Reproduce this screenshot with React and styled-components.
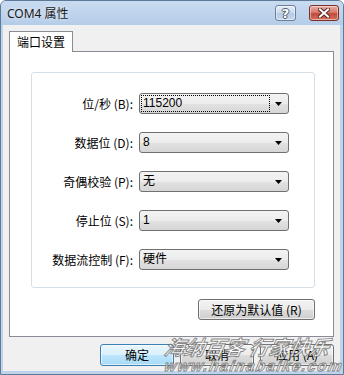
import React from "react";
import styled, { createGlobalStyle } from "styled-components";

const Global = createGlobalStyle`
  html, body { margin: 0; padding: 0; background: #ffffff; }
  body { font-family: "Liberation Sans", "Noto Sans CJK SC", sans-serif; font-size: 12px; color: #000; }
  * { box-sizing: border-box; }
`;

const Window = styled.div`
  position: relative;
  width: 344px;
  height: 375px;
  display: flex;
  flex-direction: column;
  background: #bfd3ea;
  border: 1px solid #5e7a99;
  border-radius: 6px 6px 0 0;
  overflow: hidden;
`;

const TitleBar = styled.div`
  height: 24px;
  flex: none;
  display: flex;
  align-items: flex-start;
  padding: 4px 4px 0 6px;
  background: linear-gradient(#c9dbf0, #b5cce8);
`;

const Title = styled.div`
  flex: 1;
  font-family: "Noto Sans", "Noto Sans CJK SC", sans-serif;
  font-size: 12px;
  line-height: 17px;
  color: #1a1a1a;
  text-shadow: 0 0 4px rgba(255, 255, 255, 0.9);
`;

const CaptionButton = styled.div`
  width: ${(p) => p.$w}px;
  height: 16px;
  margin-left: ${(p) => p.$ml || 0}px;
  border: 1px solid ${(p) => (p.$close ? "#7a2f28" : "#6a7f9c")};
  border-radius: 3px;
  display: flex;
  align-items: center;
  justify-content: center;
  background: ${(p) =>
    p.$close
      ? "linear-gradient(#e8aca4 0%, #d97a6c 45%, #c24a3a 55%, #d3705f 100%)"
      : "linear-gradient(#e4edf7 0%, #cfdcee 45%, #b7cbe4 55%, #c6d7ec 100%)"};
  box-shadow: inset 0 0 0 1px rgba(255, 255, 255, 0.45);
`;

const HelpGlyph = styled.span`
  font-family: "DejaVu Sans", sans-serif;
  font-weight: bold;
  font-size: 13px;
  line-height: 13px;
  color: #ffffff;
  text-shadow: -1px 0 #4a5a70, 1px 0 #4a5a70, 0 -1px #4a5a70, 0 1px #4a5a70;
`;

const Body = styled.div`
  flex: 1;
  display: flex;
  flex-direction: column;
  margin: 0 3px 3px 2px;
  padding: 6px 6px 5px 6px;
  background: #f0f0f0;
`;

const TabStrip = styled.div`
  display: flex;
  flex: none;
`;

const Tab = styled.div`
  position: relative;
  z-index: 1;
  height: 21px;
  margin-bottom: -1px;
  padding: 0 7px;
  border: 1px solid #898c95;
  border-bottom: none;
  background: #ffffff;
  font-family: "Noto Sans CJK SC", sans-serif;
  font-size: 12px;
  line-height: 19px;
`;

const Panel = styled.div`
  flex: 1;
  display: flex;
  flex-direction: column;
  padding: 20px 18px 0 21px;
  border: 1px solid #898c95;
  background: #ffffff;
`;

const Group = styled.div`
  display: grid;
  grid-template-columns: 101px 150px;
  column-gap: 6px;
  row-gap: 18px;
  align-items: center;
  padding: 20px 0 17px 0;
  border: 1px solid #d5dfe5;
  border-radius: 3px;
`;

const Label = styled.div`
  text-align: right;
  font-family: "Noto Sans CJK SC", sans-serif;
  font-size: 12px;
  line-height: 16px;
  white-space: nowrap;
`;

const Combo = styled.div`
  height: 21px;
  display: flex;
  align-items: center;
  padding: 0 6px 0 1px;
  border: 1px solid #707070;
  border-radius: 3px;
  background: linear-gradient(#f3f3f3 0%, #ececec 50%, #e2e2e2 51%, #d6d6d6 100%);
`;

const Value = styled.div`
  flex: 1;
  height: 17px;
  padding-left: 1px;
  border: 1px ${(p) => (p.$focus ? "dotted #000" : "solid transparent")};
  font-family: "Liberation Sans", "Noto Sans CJK SC", sans-serif;
  font-size: 12px;
  line-height: 15px;
  white-space: nowrap;
`;

const Arrow = styled.svg`
  margin-left: 5px;
  flex: none;
`;

const ResetRow = styled.div`
  display: flex;
  justify-content: flex-end;
  margin-top: 11px;
`;

const Button = styled.button`
  width: ${(p) => p.$w}px;
  height: ${(p) => p.$h}px;
  padding: 0;
  border: 1px solid ${(p) => (p.$default ? "#3c7fb1" : "#707070")};
  border-radius: 3px;
  background: ${(p) =>
    p.$default
      ? "linear-gradient(#eaf6fd 0%, #d9f0fc 50%, #bee6fd 51%, #a7d9f5 100%)"
      : "linear-gradient(#f2f2f2 0%, #ebebeb 50%, #dddddd 51%, #cfcfcf 100%)"};
  box-shadow: inset 0 0 0 1px rgba(255, 255, 255, 0.6);
  font-family: "Noto Sans CJK SC", sans-serif;
  font-size: 12px;
  line-height: 16px;
  color: #000;
`;

const Footer = styled.div`
  display: flex;
  justify-content: flex-end;
  gap: 6px;
  margin-top: 7px;
  flex: none;
`;

const Watermark = styled.div`
  position: absolute;
  left: 164px;
  top: 335px;
  pointer-events: none;
  display: flex;
  flex-direction: column;
  font-style: italic;
  font-weight: bold;
  color: rgba(255, 255, 255, 0.8);
  -webkit-text-stroke: 1px rgba(100, 100, 100, 0.75);
  white-space: nowrap;
`;

const WmLine = styled.div`
  font-family: ${(p) => (p.$latin ? '"Liberation Sans", sans-serif' : '"Noto Sans CJK SC", sans-serif')};
  font-size: ${(p) => p.$size}px;
  line-height: ${(p) => p.$lh}px;
  letter-spacing: ${(p) => p.$ls || 0}px;
  transform: skewX(-12deg);
`;

const rows = [
  { label: "位/秒 (B):", value: "115200", focus: true },
  { label: "数据位 (D):", value: "8" },
  { label: "奇偶校验 (P):", value: "无" },
  { label: "停止位 (S):", value: "1" },
  { label: "数据流控制 (F):", value: "硬件" },
];

export default function App() {
  return (
    <>
      <Global />
      <Window>
        <TitleBar>
          <Title>COM4 属性</Title>
          <CaptionButton $w={21}>
            <HelpGlyph>?</HelpGlyph>
          </CaptionButton>
          <CaptionButton $w={30} $ml={13} $close>
            <svg width="12" height="10" viewBox="0 0 12 10">
              <path d="M2 1.5 L10 8.5 M10 1.5 L2 8.5" stroke="#5a2a24" strokeWidth="4" strokeLinecap="square" />
              <path d="M2 1.5 L10 8.5 M10 1.5 L2 8.5" stroke="#ffffff" strokeWidth="2" strokeLinecap="square" />
            </svg>
          </CaptionButton>
        </TitleBar>
        <Body>
          <TabStrip>
            <Tab>端口设置</Tab>
          </TabStrip>
          <Panel>
            <Group>
              {rows.map((r) => (
                <React.Fragment key={r.label}>
                  <Label>{r.label}</Label>
                  <Combo>
                    <Value $focus={r.focus}>{r.value}</Value>
                    <Arrow width="7" height="4" viewBox="0 0 7 4">
                      <path d="M0 0 H7 L3.5 4 Z" fill="#000" />
                    </Arrow>
                  </Combo>
                </React.Fragment>
              ))}
            </Group>
            <ResetRow>
              <Button $w={117} $h={21}>还原为默认值 (R)</Button>
            </ResetRow>
          </Panel>
          <Footer>
            <Button $w={74} $h={22} $default>确定</Button>
            <Button $w={74} $h={22}>取消</Button>
            <Button $w={74} $h={22}>应用 (A)</Button>
          </Footer>
        </Body>
        <Watermark>
          <WmLine $size={20} $lh={21}>海纳百客 行家快乐</WmLine>
          <WmLine $latin $size={15} $lh={17} $ls={1.5}>www.hainabaike.com</WmLine>
        </Watermark>
      </Window>
    </>
  );
}
